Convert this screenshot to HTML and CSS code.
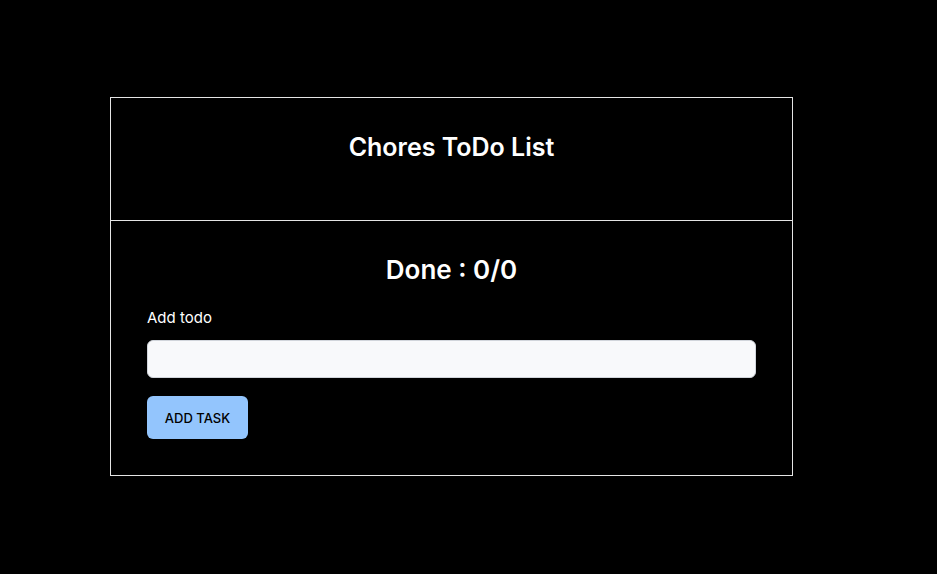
FILE: index.html
```html
<!DOCTYPE html>
<html>
<head>
<meta charset="utf-8">
<link rel="stylesheet" href="styles.css">
</head>
<body>
<div class="card">
  <div class="card-header">
    <h1 class="title">Chores ToDo List</h1>
  </div>
  <div class="card-body">
    <h2 class="done">Done : 0/0</h2>
    <label class="label" for="todo">Add todo</label>
    <input class="input" id="todo" type="text">
    <button class="btn">ADD TASK</button>
  </div>
</div>
</body>
</html>
```
FILE: styles.css
```css
html, body {
  margin: 0;
  padding: 0;
  background: #000;
  color: #fff;
  font-family: Inter, "Noto Sans", sans-serif;
}
.card {
  box-sizing: border-box;
  width: 683px;
  margin: 97px 0 0 110px;
  border: 1px solid #e5e5e5;
}
.card-header {
  box-sizing: border-box;
  height: 123px;
  border-bottom: 1px solid #e5e5e5;
  padding-top: 34px;
}
.title {
  margin: 0;
  text-align: center;
  font-size: 25px;
  line-height: 30px;
  font-weight: 600;
}
.card-body {
  padding: 34px 36px 36px;
  display: flex;
  flex-direction: column;
  align-items: flex-start;
}
.done {
  align-self: stretch;
  margin: 0;
  text-align: center;
  font-size: 26px;
  line-height: 30px;
  font-weight: 600;
}
.label {
  margin-top: 24px;
  font-size: 15px;
  line-height: 18px;
}
.input {
  box-sizing: border-box;
  align-self: stretch;
  margin-top: 13px;
  height: 38px;
  border: 1px solid #d1d5db;
  border-radius: 6px;
  background: #f8f9fb;
  font-family: inherit;
  font-size: 15px;
  padding: 0 10px;
}
.btn {
  margin-top: 18px;
  width: 101px;
  height: 43px;
  border: none;
  border-radius: 6px;
  background: #93c5fd;
  color: #000;
  font-family: inherit;
  font-size: 13px;
  font-weight: 500;
  padding: 0;
}
```
